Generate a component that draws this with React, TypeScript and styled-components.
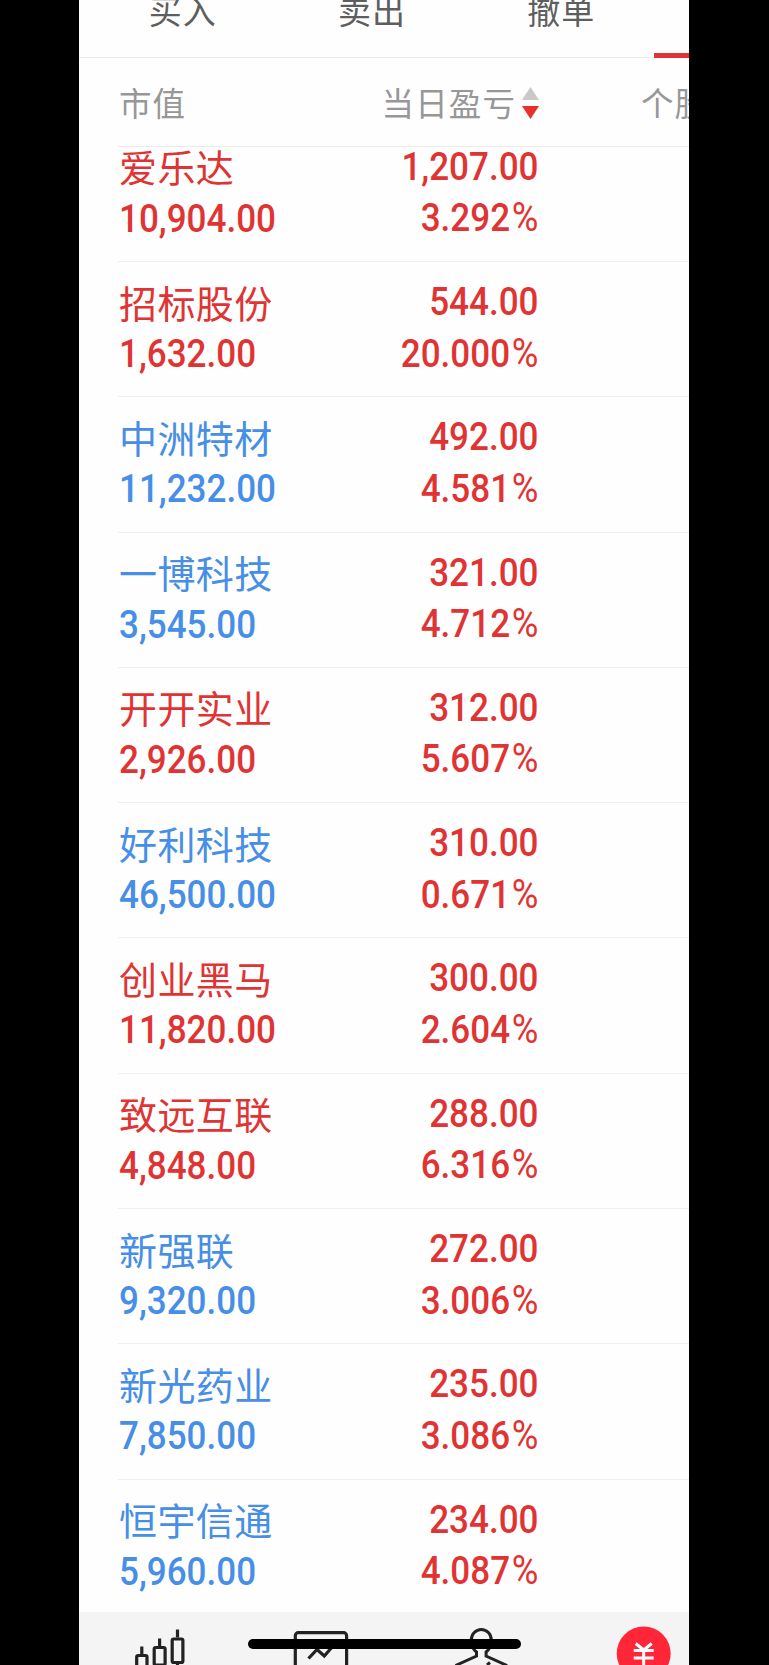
import React from "react";
import styled, { createGlobalStyle } from "styled-components";

const RED = "#e03434";
const BLUE = "#468ee6";

const GlobalStyle = createGlobalStyle`
  * { box-sizing: border-box; }
  body {
    margin: 0;
    background: #000;
    font-family: "Noto Sans CJK SC", sans-serif;
  }
`;

const Screen = styled.main`
  width: 610px;
  height: 1665px;
  margin-left: 79px;
  background: #fefefe;
  display: flex;
  flex-direction: column;
  overflow: hidden;
  position: relative;
`;

const Tabs = styled.nav`
  flex: none;
  height: 58px;
  display: flex;
  padding-left: 9px;
  border-bottom: 1px solid #ebebeb;
`;

const Tab = styled.div`
  flex: none;
  width: 189.3px;
  height: 58px;
  color: #5e5e5e;
  font-size: 33px;
  letter-spacing: 1px;
  line-height: 20px;
  text-align: center;
  white-space: nowrap;
`;

const ActiveTab = styled(Tab)`
  display: flex;
  align-items: flex-end;
  &::after {
    content: "";
    width: 190px;
    height: 5px;
    margin-left: -2px;
    background: ${RED};
  }
`;

const Columns = styled.div`
  flex: none;
  height: 89px;
  margin-left: 39px;
  border-bottom: 1px solid #ebebeb;
  display: flex;
  align-items: center;
  color: #979797;
  font-size: 32.5px;
  letter-spacing: 1.1px;
  line-height: 48px;
  white-space: nowrap;
`;

const MarketHeading = styled.div`
  flex: none;
  width: 180px;
  padding-left: 1px;
`;

const ProfitHeading = styled.div`
  flex: none;
  width: 241px;
  display: flex;
  justify-content: flex-end;
  align-items: center;
  gap: 6px;
  svg { margin-top: 2px; }
`;

const StockHeading = styled.div`
  padding-left: 102px;
`;

const List = styled.section`
  flex: none;
  height: 1465px;
  overflow: hidden;
`;

const Rows = styled.div`
  margin: -20.3px 0 0 39px;
`;

const Row = styled.div`
  height: 135.3px;
  border-bottom: 1px solid #f0f0f0;
  display: flex;
`;

const Left = styled.div<{ $color: string }>`
  flex: none;
  width: 200px;
  padding: 14.5px 0 0 1px;
  color: ${(p) => p.$color};
`;

const Right = styled.div`
  flex: none;
  width: 220.5px;
  padding-top: 14px;
  color: ${RED};
  text-align: right;
`;

const Name = styled.div`
  height: 51.5px;
  line-height: 50px;
  font-size: 38px;
  letter-spacing: 0.4px;
`;

const Num = styled.div<{ $right?: boolean }>`
  height: 51.5px;
  line-height: 51px;
  font-family: Roboto, sans-serif;
  font-weight: 500;
  font-size: 39.5px;
  white-space: nowrap;
  transform: scaleX(0.887);
  transform-origin: ${(p) => (p.$right ? "right" : "left")};
`;

const Percent = styled.span`
  margin-left: 2px;
  font-weight: 400;
  font-size: 41px;
  line-height: 1;
`;

const Footer = styled.footer`
  flex: none;
  height: 53px;
  display: flex;
  background: #f4f4f4;
`;

const Item = styled.div`
  flex: none;
  width: 161.3px;
  display: flex;
  justify-content: center;
  svg { width: 60px; height: 53px; display: block; }
`;

const HomeBar = styled.div`
  position: absolute;
  left: 169px;
  top: 1639px;
  width: 273px;
  height: 10px;
  border-radius: 5px;
  background: #000;
`;

const rows: [string, string, string, string, string][] = [
  ["爱乐达", "10,904.00", "1,207.00", "3.292", RED],
  ["招标股份", "1,632.00", "544.00", "20.000", RED],
  ["中洲特材", "11,232.00", "492.00", "4.581", BLUE],
  ["一博科技", "3,545.00", "321.00", "4.712", BLUE],
  ["开开实业", "2,926.00", "312.00", "5.607", RED],
  ["好利科技", "46,500.00", "310.00", "0.671", BLUE],
  ["创业黑马", "11,820.00", "300.00", "2.604", RED],
  ["致远互联", "4,848.00", "288.00", "6.316", RED],
  ["新强联", "9,320.00", "272.00", "3.006", BLUE],
  ["新光药业", "7,850.00", "235.00", "3.086", BLUE],
  ["恒宇信通", "5,960.00", "234.00", "4.087", BLUE],
];

export default function App() {
  return (
    <>
      <GlobalStyle />
      <Screen>
        <Tabs>
          <Tab>买入</Tab>
          <Tab>卖出</Tab>
          <Tab>撤单</Tab>
          <ActiveTab />
        </Tabs>
        <Columns>
          <MarketHeading>市值</MarketHeading>
          <ProfitHeading>
            当日盈亏
            <svg width="17" height="32" viewBox="0 0 17 32">
              <path d="M8.5 0 17 13H0z" fill="#c9c9c9" />
              <path d="M0 19h17L8.5 32z" fill="#e92f2f" />
            </svg>
          </ProfitHeading>
          <StockHeading>个股</StockHeading>
        </Columns>
        <List>
          <Rows>
            {rows.map(([name, value, profit, rate, color]) => (
              <Row key={name}>
                <Left $color={color}>
                  <Name>{name}</Name>
                  <Num>{value}</Num>
                </Left>
                <Right>
                  <Num $right>{profit}</Num>
                  <Num $right>
                    {rate}
                    <Percent>%</Percent>
                  </Num>
                </Right>
              </Row>
            ))}
          </Rows>
        </List>
        <Footer>
          <Item>
            <svg viewBox="0 0 60 53" fill="none" stroke="#222" strokeWidth="3.2">
              <path d="M11.800 34.500v8M29.600 26.500v8M47.500 17.500v8M47.500 51v6" />
              <rect x="6.700" y="43.500" width="10.300" height="25" rx="1.500" />
              <rect x="24.200" y="35.500" width="10.900" height="17.500" rx="1.500" />
              <rect x="42.200" y="27" width="10.700" height="23.500" rx="1.500" />
            </svg>
          </Item>
          <Item>
            <svg viewBox="0 0 60 53" fill="none" stroke="#222" strokeWidth="3.200">
              <rect x="4.300" y="20.700" width="51.300" height="50" rx="3" />
              <path d="M17.500 46.500 26 37.500l7.300 6.500L42 34" />
            </svg>
          </Item>
          <Item>
            <svg viewBox="0 0 60 53" fill="none" stroke="#222" strokeWidth="3">
              <path d="M3.500 53.500 24.500 44v-4q-5.200-4-5.200-12a10 10.500 0 0 1 20 0q0 8-5.200 12v4l21 9.500M35 53l3-2.500" />
            </svg>
          </Item>
          <Item>
            <svg viewBox="0 0 60 53">
              <circle cx="29.700" cy="41.500" r="27" fill="#ff2638" />
              <path d="M21.700 31.500l8 6.500 8-6.500M19.700 38.500h20M19.700 46h20M29.700 38v20" fill="none" stroke="#fff" strokeWidth="3" />
            </svg>
          </Item>
        </Footer>
        <HomeBar />
      </Screen>
    </>
  );
}
